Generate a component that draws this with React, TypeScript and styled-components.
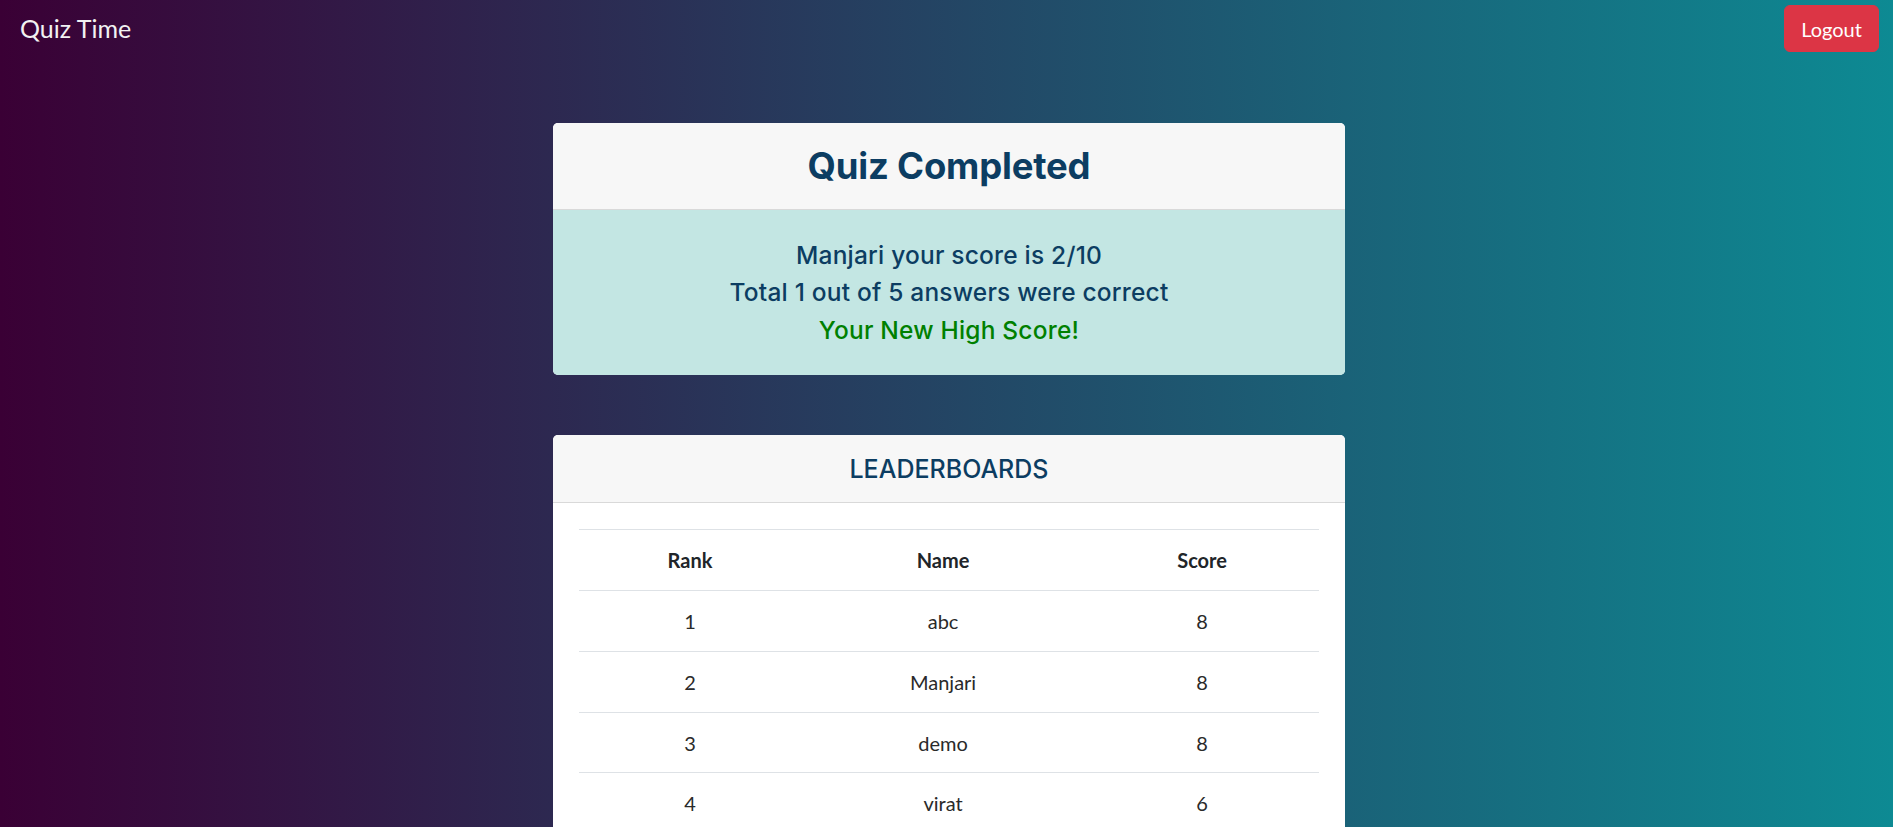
import React from "react";
import styled, { createGlobalStyle } from "styled-components";

const GlobalStyle = createGlobalStyle`
  html, body {
    margin: 0;
    padding: 0;
  }
  body {
    font-family: "Lato", "Liberation Sans", sans-serif;
    background: #3a0035;
  }
  * { box-sizing: border-box; }
`;

const Page = styled.div`
  height: 100vh;
  overflow: hidden;
  background: linear-gradient(to right, #3a0035 0%, #0d8a93 100%);
  display: flex;
  flex-direction: column;
`;

const NavBar = styled.nav`
  display: flex;
  align-items: center;
  justify-content: space-between;
  padding: 5px 14px 5px 20px;
  height: 57px;
`;

const Brand = styled.span`
  font-family: "Lato", sans-serif;
  font-size: 25px;
  color: #f2f2f2;
  margin-top: -1px;
`;

const LogoutButton = styled.button`
  font-family: "Lato", sans-serif;
  font-size: 20px;
  line-height: 30px;
  color: #ffffff;
  background: #dc3545;
  border: 1px solid #dc3545;
  border-radius: 6px;
  padding: 7px 16px;
  width: 95px;
  height: 47px;
  cursor: pointer;
`;

const Main = styled.main`
  display: flex;
  flex-direction: column;
  align-items: center;
  gap: 60px;
  padding: 66px 0 0 5px;
`;

const Card = styled.section`
  width: 792px;
  border-radius: 5px;
  overflow: hidden;
  flex-shrink: 0;
  background: #ffffff;
`;

const CardHeader = styled.header<{ $h: number }>`
  height: ${(p) => p.$h}px;
  background: #f7f7f7;
  border-bottom: 1px solid #d9d9d9;
  display: flex;
  align-items: center;
  justify-content: center;
`;

const Title = styled.h1`
  margin: 0;
  font-family: "Inter", sans-serif;
  font-weight: 700;
  font-size: 36.5px;
  color: #0c3d62;
  letter-spacing: -0.2px;
`;

const SubTitle = styled.h2`
  margin: 1px 0 0;
  font-family: "Inter", sans-serif;
  font-weight: 500;
  font-size: 25px;
  color: #0c3d62;
`;

const ScoreBody = styled.div`
  height: 165px;
  background: #c3e6e3;
  display: flex;
  flex-direction: column;
  align-items: center;
  justify-content: center;
  padding-top: 1px;
`;

const ScoreLine = styled.p<{ $highlight?: boolean }>`
  margin: 0;
  font-family: "Inter", sans-serif;
  font-weight: 500;
  font-size: 24.5px;
  letter-spacing: 0.2px;
  line-height: 37.5px;
  color: ${(p) => (p.$highlight ? "#008000" : "#0c3d62")};
`;

const BoardBody = styled.div`
  padding: 26px 26px 40px;
  background: #ffffff;
`;

const Table = styled.table`
  width: 100%;
  border-collapse: collapse;
  font-family: "Lato", sans-serif;
  font-size: 20px;
  color: #212529;
`;

const HeadCell = styled.th<{ $w: string }>`
  width: ${(p) => p.$w};
  padding: 15px;
  line-height: 30px;
  font-weight: 700;
  text-align: center;
  border-top: 1px solid #dee2e6;
`;

const Cell = styled.td`
  padding: 15px 15px 14.75px;
  line-height: 30px;
  text-align: center;
  border-top: 1px solid #dee2e6;
  color: #2a2a2a;
`;

const leaders = [
  { rank: 1, name: "abc", score: 8 },
  { rank: 2, name: "Manjari", score: 8 },
  { rank: 3, name: "demo", score: 8 },
  { rank: 4, name: "virat", score: 6 },
];

export default function App() {
  return (
    <>
      <GlobalStyle />
      <Page>
        <NavBar>
          <Brand>Quiz Time</Brand>
          <LogoutButton>Logout</LogoutButton>
        </NavBar>
        <Main>
          <Card>
            <CardHeader $h={87}>
              <Title>Quiz Completed</Title>
            </CardHeader>
            <ScoreBody>
              <ScoreLine>Manjari your score is 2/10</ScoreLine>
              <ScoreLine>Total 1 out of 5 answers were correct</ScoreLine>
              <ScoreLine $highlight>Your New High Score!</ScoreLine>
            </ScoreBody>
          </Card>
          <Card>
            <CardHeader $h={68}>
              <SubTitle>LEADERBOARDS</SubTitle>
            </CardHeader>
            <BoardBody>
              <Table>
                <thead>
                  <tr>
                    <HeadCell $w="30%">Rank</HeadCell>
                    <HeadCell $w="38.4%">Name</HeadCell>
                    <HeadCell $w="31.6%">Score</HeadCell>
                  </tr>
                </thead>
                <tbody>
                  {leaders.map((l) => (
                    <tr key={l.rank}>
                      <Cell>{l.rank}</Cell>
                      <Cell>{l.name}</Cell>
                      <Cell>{l.score}</Cell>
                    </tr>
                  ))}
                </tbody>
              </Table>
            </BoardBody>
          </Card>
        </Main>
      </Page>
    </>
  );
}
